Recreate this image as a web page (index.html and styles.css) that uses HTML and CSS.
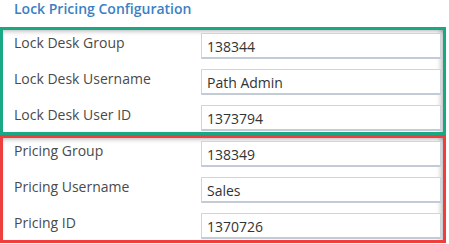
FILE: index.html
```html
<!DOCTYPE html>
<html lang="en">
  <head>
    <meta charset="UTF-8" />
    <meta name="viewport" content="width=device-width, initial-scale=1.0" />
    <title>Lock Pricing Configuration</title>
    <link rel="stylesheet" href="styles.css">
  </head>

  <body>
    <div class="wrap">
      <h2 class="title">Lock Pricing Configuration</h2>

      <div class="group group-green">
        <div class="row">
          <label>Lock Desk Group</label>
          <input type="text" value="138344" />
        </div>
        <div class="row">
          <label>Lock Desk Username</label>
          <input type="text" value="Path Admin" />
        </div>
        <div class="row">
          <label>Lock Desk User ID</label>
          <input type="text" value="1373794" />
        </div>
      </div>

      <div class="group group-red">
        <div class="row">
          <label>Pricing Group</label>
          <input type="text" value="138349" />
        </div>
        <div class="row">
          <label>Pricing Username</label>
          <input type="text" value="Sales" />
        </div>
        <div class="row">
          <label>Pricing ID</label>
          <input type="text" value="1370726" />
        </div>
      </div>
    </div>
  </body>
</html>
```

FILE: styles.css
```css
    body {
      margin: 0;
      background: #fff;
      font-family: "Open Sans", "Liberation Sans", sans-serif;
    }
    .wrap {
      width: 446px;
    }
    .title {
      margin: 0;
      height: 27px;
      padding-left: 14px;
      font-size: 14px;
      font-weight: 600;
      line-height: 18px;
      color: #3b7fc4;
    }
    .group {
      border: 3px solid #1aa784;
      padding: 3px 0 1px 0;
      display: flex;
      flex-direction: column;
      gap: 10px;
      box-shadow: inset 0 4px 5px -3px rgba(0, 0, 0, 0.3),
        inset -6px 0 5px -4px rgba(0, 0, 0, 0.25);
    }
    .group-red {
      border-color: #ee3e3e;
    }
    .row {
      display: grid;
      grid-template-columns: 198px 1fr;
      align-items: start;
      padding-right: 2px;
    }
    .row label {
      padding-left: 11px;
      font-size: 14px;
      line-height: 20px;
      color: #4a4a4a;
    }
    .row input {
      box-sizing: border-box;
      height: 26px;
      width: 100%;
      margin: 0;
      border: 1px solid #cdd5dd;
      border-bottom: 2px solid #c3ccd6;
      padding: 2px 5px 0 5px;
      font-family: "Open Sans", "Liberation Sans", sans-serif;
      font-size: 14px;
      color: #333;
      background: #fff;
    }
```
